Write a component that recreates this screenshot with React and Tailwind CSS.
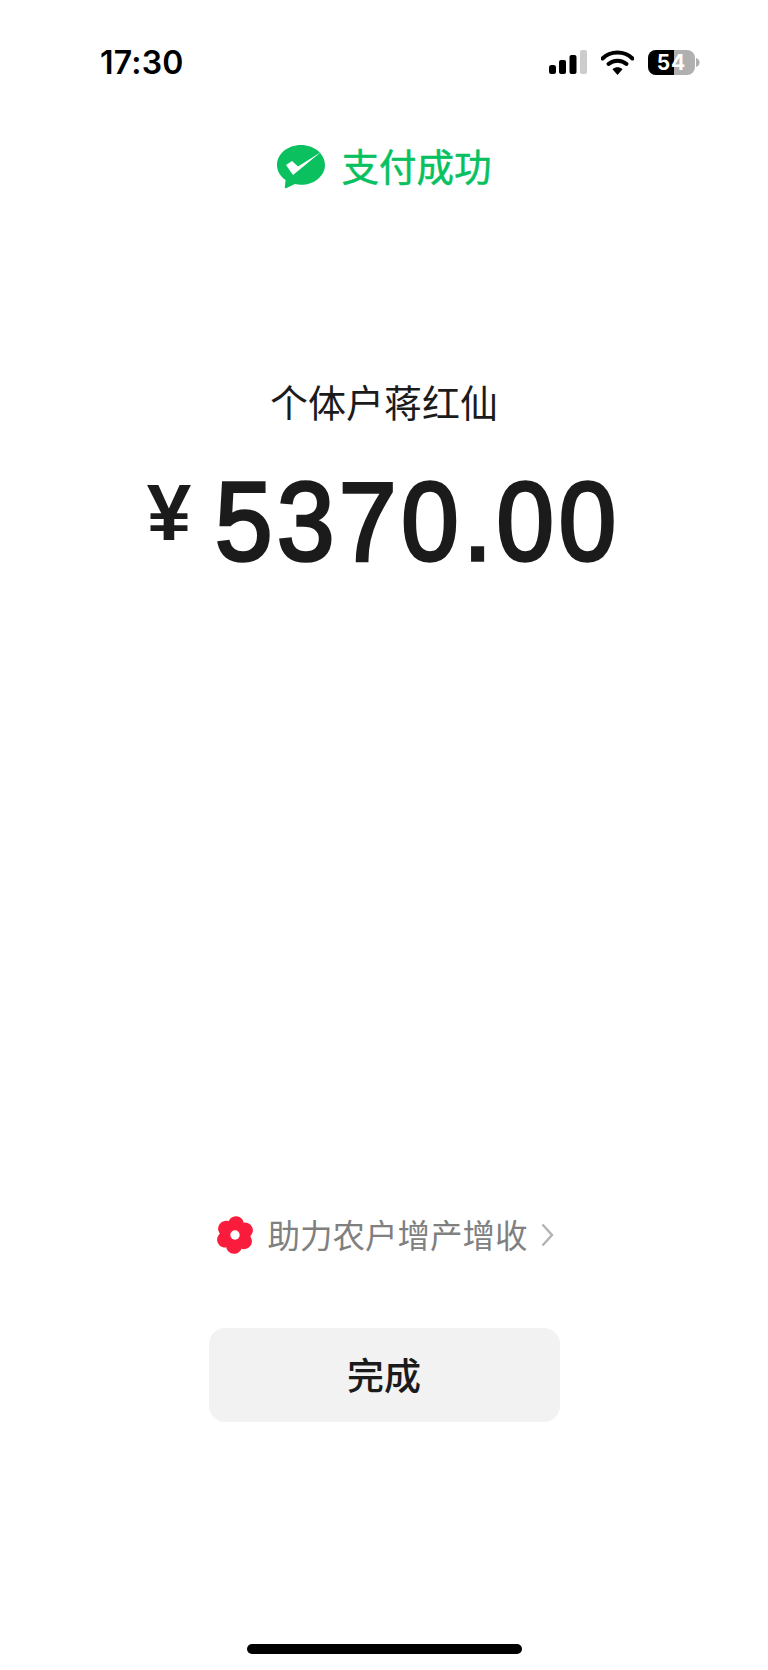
const cjk = '"Noto Sans CJK SC", sans-serif';

function Signal() {
  return (
    <svg width="38" height="24" viewBox="0 0 38 24" className="block">
      <rect x="0" y="15" width="7" height="9" rx="2.5" fill="#000" />
      <rect x="10" y="10" width="7" height="14" rx="2" fill="#000" />
      <rect x="20.5" y="5" width="7" height="19" rx="2" fill="#000" />
      <rect x="31" y="0" width="7" height="24" rx="2" fill="#ccc" />
    </svg>
  );
}

function Wifi() {
  return (
    <svg width="33" height="25" viewBox="0 0 33 25" className="block">
      <path d="M1.5 8.5C9.5 0.5 23.5 0.5 31.5 8.5" fill="none" stroke="#000" strokeWidth="4" strokeLinecap="round" />
      <path d="M7.5 14C12.5 9.5 20.5 9.5 25.5 14" fill="none" stroke="#000" strokeWidth="4" strokeLinecap="round" />
      <path d="M11.5 19.2 L16.5 25 L21.5 19.2 C18.5 16.6 14.5 16.6 11.5 19.2Z" fill="#000" />
    </svg>
  );
}

function Battery() {
  return (
    <div className="relative flex items-center">
      <div className="relative w-[47px] h-[25px] rounded-[8px] overflow-hidden bg-[#b0b0b0]">
        <div className="w-[26px] h-full bg-black" />
        <div className="absolute inset-0 flex items-center justify-center text-white text-[21px] font-bold tracking-[1px] leading-none" style={{ fontFamily: 'Inter, sans-serif' }}>54</div>
      </div>
      <svg width="4" height="9" viewBox="0 0 4 9" className="ml-[1px] block">
        <path d="M0 0C2.5 0.8 3.5 2.5 3.5 4.5S2.5 8.2 0 9Z" fill="#b0b0b0" />
      </svg>
    </div>
  );
}

function PayLogo() {
  return (
    <svg width="48" height="44" viewBox="0 0 48 44" className="block">
      <path d="M24 0C10.7 0 0 8.9 0 19.9C0 26 3.3 31.4 8.6 35.1L7.8 42C7.7 43.2 8.7 43.7 9.6 43.1L18 38.9C19.9 39.4 21.9 39.7 24 39.7C37.3 39.7 48 30.8 48 19.9C48 8.9 37.3 0 24 0Z" fill="#0bc15f" />
      <path d="M9 20L15 16L21 21.5L44 7L16 30Z" fill="#fff" />
    </svg>
  );
}

function Flower() {
  const angles = [0, 60, 120, 180, 240, 300];
  return (
    <svg width="38" height="38" viewBox="0 0 38 38" className="block">
      {angles.map((a) => (
        <circle key={a} cx="19" cy="8" r="7.9" fill="#fa1c3c" transform={`rotate(${a + 5} 19 19)`} />
      ))}
      <circle cx="19" cy="19" r="9" fill="#fa1c3c" />
      <circle cx="19" cy="19" r="4.7" fill="#fff" />
    </svg>
  );
}

export default function App() {
  return (
    <div className="w-[768px] h-[1670px] bg-white flex flex-col items-center overflow-hidden">
      <div className="w-full h-[49px]" />
      <div className="w-full h-[26px] flex items-center justify-between pl-[100px] pr-[68px]">
        <span className="text-[32px] font-semibold leading-none text-black tracking-[0.2px] translate-y-[1px]" style={{ fontFamily: 'Inter, sans-serif' }}>17:30</span>
        <div className="flex items-center">
          <Signal />
          <div className="ml-[14px]"><Wifi /></div>
          <div className="ml-[14px]"><Battery /></div>
        </div>
      </div>

      <div className="mt-[70px] flex items-center h-[44px] w-full justify-center">
        <PayLogo />
        <span className="ml-[17px] text-[37.5px] leading-none text-[#07c160] -translate-y-[2px] [-webkit-text-stroke:0.5px_#07c160]" style={{ fontFamily: cjk }}>支付成功</span>
      </div>

      <div className="mt-[190px] text-[38px] leading-[44px] text-[#1b1b1b]" style={{ fontFamily: cjk }}>个体户蒋红仙</div>

      <div className="mt-[55px] flex items-start h-[88px] text-[#1b1b1b]" style={{ fontFamily: '"Liberation Sans", sans-serif' }}>
        <span className="text-[80px] font-bold leading-[69px]">¥</span>
        <span className="ml-[24px] mr-[-30px] origin-left scale-x-[0.93] text-[111px] leading-[88px] tracking-[5px] [-webkit-text-stroke:3.5px_#1b1b1b]">5370.00</span>
      </div>

      <div className="mt-[650px] flex items-center h-[37px] pl-[2px]">
        <Flower />
        <span className="ml-[13px] text-[32.5px] leading-none text-[#808080]" style={{ fontFamily: cjk }}>助力农户增产增收</span>
        <svg width="13" height="24" viewBox="0 0 13 24" className="ml-[13px] block">
          <path d="M1.5 1.5L11 12L1.5 22.5" fill="none" stroke="#b3b3b3" strokeWidth="2.4" />
        </svg>
      </div>

      <button className="mt-[75px] w-[351px] h-[94px] rounded-[16px] bg-[#f2f2f2] text-[37px] font-medium text-[#1b1b1b] flex items-center justify-center" style={{ fontFamily: cjk }}>完成</button>

      <div className="mt-[222px] w-[275px] h-[10px] rounded-full bg-black" />
    </div>
  );
}
